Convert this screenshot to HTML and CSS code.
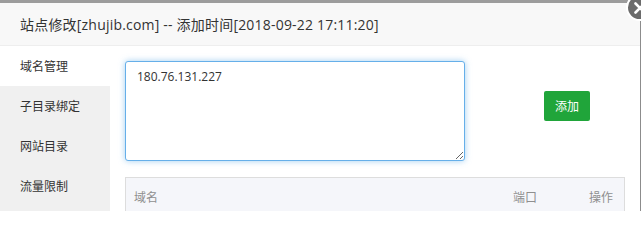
FILE: index.html
```html
<!DOCTYPE html>
<html lang="zh-CN">
<head>
<meta charset="utf-8">
<title>站点修改</title>
<link rel="stylesheet" href="styles.css">
</head>
<body>
<div class="shade"></div>
<div class="dialog">
  <div class="title">站点修改[zhujib.com] -- 添加时间[2018-09-22 17:11:20]</div>
  <div class="body">
    <ul class="menu">
      <li class="item active">域名管理</li>
      <li class="item">子目录绑定</li>
      <li class="item">网站目录</li>
      <li class="item">流量限制</li>
    </ul>
    <div class="main">
      <div class="form-row">
        <textarea class="domains">180.76.131.227</textarea>
        <button class="btn">添加</button>
      </div>
      <div class="table">
        <div class="thead">
          <div class="th">域名</div>
          <div class="th">端口</div>
          <div class="th right">操作</div>
        </div>
      </div>
    </div>
  </div>
  <a class="close" aria-label="关闭">
    <svg viewBox="0 0 22 22" width="22" height="22"><path d="M6.5 6.5 L15.5 15.5 M15.5 6.5 L6.5 15.5" stroke="#fff" stroke-width="2.6" stroke-linecap="round" fill="none"/></svg>
  </a>
</div>
</body>
</html>
```

FILE: styles.css
```css
* { box-sizing: border-box; }
html, body { margin: 0; padding: 0; background: #fff; }
body {
  width: 641px;
  height: 211px;
  overflow: hidden;
  position: relative;
  font-family: "Open Sans", "Noto Sans CJK SC", sans-serif;
  color: #333;
}
.shade { height: 3px; background: #9c9c9c; }
.dialog {
  width: 641px;
  border-right: 1px solid #8c8c8c;
  position: relative;
  height: 208px;
}
.title {
  height: 43px;
  line-height: 43px;
  padding-left: 20px;
  font-size: 14px;
  letter-spacing: 0.2px;
  background: #f8f8f8;
  border-bottom: 1px solid #eee;
  color: #333;
}
.body { display: flex; height: 165px; }
.menu {
  list-style: none;
  margin: 0;
  padding: 0;
  width: 110px;
  background: #f0f0f0;
  flex: none;
}
.item {
  height: 40px;
  line-height: 41px;
  padding-left: 20px;
  font-size: 12px;
  color: #333;
}
.item.active { background: #fff; }
.main { flex: 1; padding: 15px 15px 0 15px; }
.form-row { display: flex; align-items: flex-start; }
.domains {
  width: 340px;
  height: 100px;
  margin: 0;
  padding: 6px 11px;
  border: 1px solid #66afe9;
  border-radius: 3px;
  box-shadow: 0 0 6px rgba(102, 175, 233, 0.6);
  font-family: "Open Sans", "Noto Sans CJK SC", sans-serif;
  font-size: 12px;
  line-height: 18px;
  color: #333;
  outline: none;
}
.btn {
  margin: 30px 0 0 79px;
  width: 46px;
  height: 30px;
  padding: 0;
  border: 0;
  border-radius: 2px;
  background: #20a53a;
  color: #fff;
  font-family: "Open Sans", "Noto Sans CJK SC", sans-serif;
  font-size: 12px;
}
.table {
  margin-top: 16px;
  width: 500px;
  border: 1px solid #ddd;
}
.thead {
  display: grid;
  grid-template-columns: 1fr 43px 76px;
  height: 38px;
  align-items: center;
  background: #f5f6fa;
}
.th { padding: 0 8px; font-size: 12px; color: #8f8f8f; }
.th.right { text-align: right; padding-right: 11px; }
.close {
  position: absolute;
  top: -9px;
  right: -13px;
  width: 27px;
  height: 27px;
  border-radius: 50%;
  border: 2px solid #fff;
  background: #6b6b6b;
  display: flex;
  align-items: center;
  justify-content: center;
}
```
